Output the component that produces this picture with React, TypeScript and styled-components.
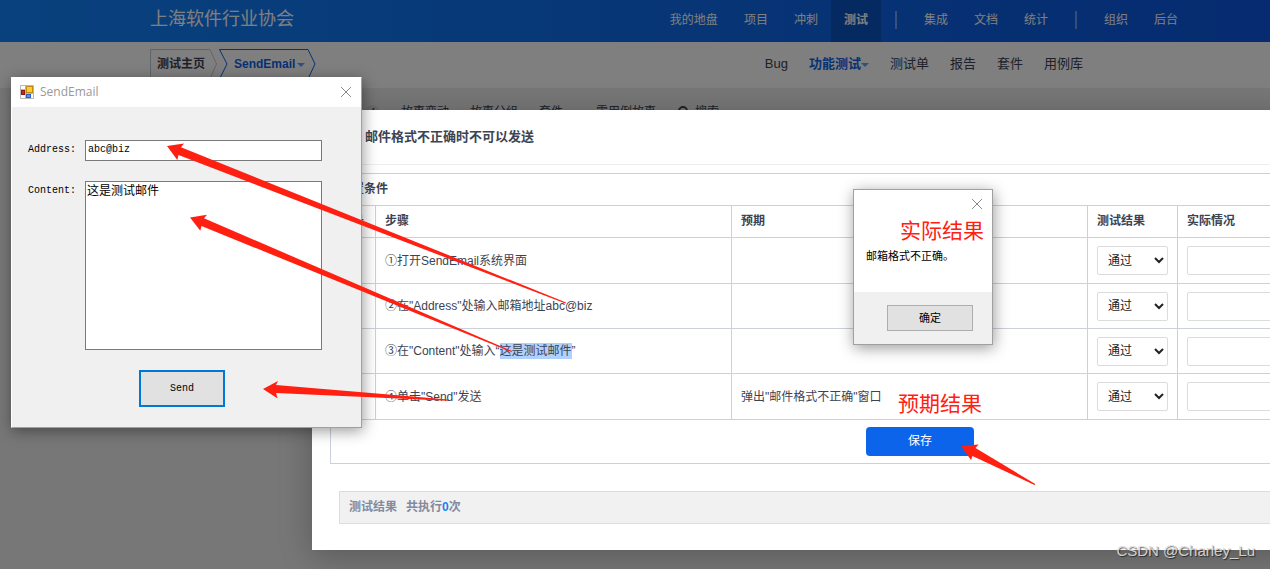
import React from "react";
import styled, { createGlobalStyle } from "styled-components";

const SANS = `"Liberation Sans", "Noto Sans CJK SC", sans-serif`;
const MONO = `"Liberation Mono", "Noto Sans CJK SC", monospace`;

const GlobalStyle = createGlobalStyle`
  *, *::before, *::after { box-sizing: border-box; }
  body { margin: 0; background: #777; font: 12px/20px ${SANS}; color: #3c4353; }
  button, input, select, textarea { font: inherit; color: inherit; margin: 0; }
  a { color: inherit; text-decoration: none; }
`;

const Page = styled.div`
  position: relative;
  min-height: 100vh;
  overflow: hidden;
  background: #efefef;
`;

const Header = styled.header`
  display: flex;
  align-items: center;
  height: 42px;
  padding: 0 79px 0 150px;
  background: linear-gradient(90deg, #1183fb 0%, #0c56e0 100%);
  color: #fff;
`;

const Brand = styled.h1`
  margin: 0 auto 4px 0;
  font-size: 18px;
  font-weight: 400;
  line-height: 24px;
`;

const MainNav = styled.nav`
  display: flex;
  align-items: center;
  height: 100%;
`;

const NavLink = styled.a<{ $active?: boolean }>`
  height: 100%;
  padding: 0 13px;
  line-height: 40px;
  white-space: nowrap;
  font-weight: ${(p) => (p.$active ? 700 : 400)};
  background: ${(p) => (p.$active ? "rgba(0, 0, 0, 0.16)" : "none")};
`;

const NavDivider = styled.span`
  width: 2px;
  height: 18px;
  margin: 0 14px 2px;
  background: rgba(255, 255, 255, 0.4);
`;

const SubHeader = styled.div`
  display: flex;
  align-items: flex-start;
  justify-content: space-between;
  height: 46px;
  padding: 7px 187px 0 150px;
  background: #fff;
`;

const Breadcrumb = styled.nav`
  position: relative;
  display: flex;
  gap: 29px;
  padding-left: 7px;
  line-height: 30px;
  font-weight: 700;
`;

const CrumbShape = styled.svg`
  position: absolute;
  top: 0;
  left: 0;
`;

const Crumb = styled.a<{ $active?: boolean }>`
  position: relative;
  display: flex;
  align-items: center;
  gap: 2px;
  color: ${(p) => (p.$active ? "#0c64eb" : "#3c4353")};
`;

const Caret = styled.span`
  width: 0;
  height: 0;
  margin-top: 2px;
  border: 4px solid transparent;
  border-top-color: #6c9cf0;
  border-bottom: 0;
`;

const SubNav = styled.nav`
  display: flex;
  gap: 21px;
  font-size: 13px;
  line-height: 29px;
`;

const SubLink = styled.a<{ $active?: boolean }>`
  display: flex;
  align-items: center;
  white-space: nowrap;
  font-weight: ${(p) => (p.$active ? 700 : 400)};
  color: ${(p) => (p.$active ? "#0c64eb" : "#3c4353")};
`;

const Toolbar = styled.div`
  display: flex;
  align-items: center;
  gap: 21px;
  padding: 14px 20px 0 365px;
`;

const ToolGroup = styled.div`
  display: flex;
  align-items: center;
  gap: 21px;
  margin-right: 12px;
`;

const Count = styled.span`
  width: 15px;
  height: 15px;
  border-radius: 8px;
  background: #ddd;
  font-size: 10px;
  line-height: 15px;
  text-align: center;
`;

const ToolLink = styled.a`
  display: flex;
  align-items: center;
  gap: 6px;
`;

const Backdrop = styled.div`
  position: absolute;
  inset: 0;
  background: rgba(0, 0, 0, 0.5);
`;

const Modal = styled.section`
  position: absolute;
  top: 110px;
  left: 312px;
  width: calc(100% - 54px);
  background: #fff;
  box-shadow: 0 6px 30px rgba(0, 0, 0, 0.25);
`;

const ModalTitle = styled.h2`
  height: 55px;
  margin: 0;
  padding: 0 53px;
  border-bottom: 1px solid #eee;
  font-size: 13px;
  line-height: 53px;
`;

const ModalBody = styled.div`
  padding: 8px 18px 26px;
`;

const StepTable = styled.table`
  width: 100%;
  border-collapse: collapse;
  border: 1px solid #cbd0db;
  table-layout: fixed;
  text-align: left;
`;

const NumberCol = styled.col`
  width: 45px;
`;

const ResultCol = styled.col`
  width: 90px;
`;

const RealCol = styled.col`
  width: 332px;
`;

const Cell = styled.td`
  padding: 0 9px;
  border: 1px solid #cbd0db;
`;

const HeadCell = styled(Cell).attrs({ as: "th" })`
  height: 32px;
  padding-bottom: 1px;
`;

const StepRow = styled.tr`
  height: 45px;
  &:first-child,
  &:last-child {
    height: 46px;
  }
`;

const SaveCell = styled(Cell)`
  height: 44px;
  text-align: center;
`;

const Highlight = styled.mark`
  padding: 1px 0;
  background: #b0d1ff;
  color: inherit;
`;

const ResultSelect = styled.select`
  display: block;
  width: 100%;
  height: 29px;
  padding: 0 6px;
  border: 1px solid #dcdcdc;
  border-radius: 2px;
  background: #fff;
  color: #222;
`;

const RealInput = styled.input`
  display: block;
  width: 100%;
  height: 29px;
  padding: 0 8px;
  border: 1px solid #dcdcdc;
  border-radius: 2px;
`;

const SaveButton = styled.button`
  width: 108px;
  height: 29px;
  border: 0;
  border-radius: 4px;
  padding: 0 0 2px;
  background: #0c64eb;
  color: #fff;
  vertical-align: middle;
`;

const ResultBar = styled.div`
  display: flex;
  gap: 9px;
  margin: 27px 9px 0;
  padding: 0 9px;
  border: 1px solid #ddd;
  background: #f1f1f1;
  color: #838a9d;
  font-weight: 700;
  line-height: 31px;
`;

const RunCount = styled.span`
  color: #1183fb;
`;

const DesktopWindow = styled.section<{ $x: number; $y: number; $w: number }>`
  position: absolute;
  left: ${(p) => p.$x}px;
  top: ${(p) => p.$y}px;
  width: ${(p) => p.$w}px;
  border: 1px solid #a0a0a0;
  background: #fff;
  color: #000;
  box-shadow: 1px 3px 14px rgba(0, 0, 0, 0.4);
`;

const MailWindow = styled(DesktopWindow)`
  border-color: #fff #a0a0a0 #a0a0a0 #fff;
`;

const TitleBar = styled.div`
  display: flex;
  align-items: center;
  gap: 6px;
  height: 29px;
  padding: 0 9px 2px 8px;
  color: #999;
  font-family: "Open Sans", sans-serif;
`;

const CloseButton = styled.button`
  display: flex;
  margin-left: auto;
  padding: 0;
  border: 0;
  background: none;
`;

const MailForm = styled.form`
  display: grid;
  grid-template-columns: 47px 237px;
  column-gap: 10px;
  row-gap: 20px;
  padding: 33px 16px 20px;
  background: #f0f0f0;
  font-family: ${MONO};
`;

const MailLabel = styled.label`
  font-size: 10px;
  line-height: 19px;
  white-space: nowrap;
`;

const MailInput = styled.input`
  width: 100%;
  height: 21px;
  padding: 0 2px 2px;
  border: 1px solid #7a7a7a;
  background: #fff;
  font-size: 10px;
`;

const MailText = styled.textarea`
  display: block;
  width: 100%;
  height: 169px;
  padding: 1px;
  border: 1px solid #7a7a7a;
  background: #fff;
  line-height: 18px;
  resize: none;
`;

const SendButton = styled.button`
  grid-column: 1 / -1;
  justify-self: center;
  width: 86px;
  height: 37px;
  margin-left: 14px;
  border: 2px solid #0078d7;
  background: #e1e1e1;
  font-size: 10px;
`;

const AlertTop = styled.div`
  display: flex;
  padding: 8px 9px 0;
`;

const AlertText = styled.p`
  margin: 0;
  padding: 36px 12px 26px;
  font-size: 11px;
`;

const AlertFooter = styled.div`
  display: flex;
  justify-content: flex-end;
  padding: 13px 19px;
  background: #f0f0f0;
`;

const OkButton = styled.button`
  width: 86px;
  height: 26px;
  padding: 0;
  border: 1px solid #adadad;
  background: #e1e1e1;
  font-size: 11px;
`;

const Arrows = styled.svg`
  position: absolute;
  top: 0;
  left: 0;
  pointer-events: none;
`;

const Note = styled.span<{ $x: number; $y: number }>`
  position: absolute;
  left: ${(p) => p.$x}px;
  top: ${(p) => p.$y}px;
  color: #ff2012;
  font-family: "Noto Sans CJK SC", sans-serif;
  font-size: 21px;
  line-height: 28px;
`;

const Watermark = styled.span`
  position: absolute;
  right: 15px;
  bottom: 8px;
  color: rgba(225, 225, 225, 0.9);
  font-size: 15px;
  text-shadow: 1px 1px 1px rgba(0, 0, 0, 0.6);
`;

const CloseIcon = () => (
  <svg width="12" height="12" viewBox="0 0 12 12" stroke="#8a8a8a" fill="none">
    <path d="M1 1 11 11M11 1 1 11" />
  </svg>
);

const AppIcon = () => (
  <svg width="14" height="14" viewBox="0 0 14 14">
    <path d="M.5.5h13v13H.5z" fill="#fff" stroke="#b8b8b8" />
    <path d="M0 9.500h6M5.500 0v14M5 8.500h9M0 4.500h5" fill="none" stroke="#b8b8b8" />
    <rect x="1.500" y="5.500" width="3" height="4" fill="#c3281c" stroke="#8e1a12" />
    <rect x="6.500" y="1.500" width="6" height="6" fill="#fccb35" stroke="#c18d0c" />
    <rect x="6.500" y="9.500" width="4" height="3" fill="#5b93f0" stroke="#2b5fc8" />
  </svg>
);

const steps: { text: React.ReactNode; expected: string }[] = [
  { text: "①打开SendEmail系统界面", expected: "" },
  { text: '②在"Address"处输入邮箱地址abc@biz', expected: "" },
  {
    text: (
      <>
        ③在"Content"处输入“<Highlight>这是测试邮件</Highlight>”
      </>
    ),
    expected: "",
  },
  { text: '④单击"Send"发送', expected: '弹出"邮件格式不正确"窗口' },
];

export default function App() {
  return (
    <Page>
      <GlobalStyle />
      <Header>
        <Brand>上海软件行业协会</Brand>
        <MainNav>
          <NavLink href="#">我的地盘</NavLink>
          <NavLink href="#">项目</NavLink>
          <NavLink href="#">冲刺</NavLink>
          <NavLink href="#" $active>测试</NavLink>
          <NavDivider />
          <NavLink href="#">集成</NavLink>
          <NavLink href="#">文档</NavLink>
          <NavLink href="#">统计</NavLink>
          <NavDivider />
          <NavLink href="#">组织</NavLink>
          <NavLink href="#">后台</NavLink>
        </MainNav>
      </Header>
      <SubHeader>
        <Breadcrumb>
          <CrumbShape width="168" height="31" viewBox="0 0 168 31" fill="none">
            <path d="M.5 30V.5H60L66.500 15 60 30" stroke="#c4c8d2" />
            <path d="M69.500 30 77 15 69.500.5H158L165 15 158 30" stroke="#0c64eb" />
          </CrumbShape>
          <Crumb href="#">测试主页</Crumb>
          <Crumb href="#" $active>
            SendEmail <Caret />
          </Crumb>
        </Breadcrumb>
        <SubNav>
          <SubLink href="#">Bug</SubLink>
          <SubLink href="#" $active>
            功能测试
            <Caret />
          </SubLink>
          <SubLink href="#">测试单</SubLink>
          <SubLink href="#">报告</SubLink>
          <SubLink href="#">套件</SubLink>
          <SubLink href="#">用例库</SubLink>
        </SubNav>
      </SubHeader>
      <Toolbar>
        <ToolGroup>
          <Count>4</Count>
          <ToolLink href="#">故事变动</ToolLink>
          <ToolLink href="#">故事分组</ToolLink>
          <ToolLink href="#">套件</ToolLink>
        </ToolGroup>
        <ToolLink href="#">零用例故事</ToolLink>
        <ToolLink href="#">
          <svg width="12" height="12" viewBox="0 0 12 12" fill="none" stroke="#3c4353" strokeWidth="2">
            <circle cx="6" cy="5" r="4" />
            <path d="m8 8 3 3" />
          </svg>
          搜索
        </ToolLink>
      </Toolbar>

      <Backdrop />

      <Modal>
        <ModalTitle>邮件格式不正确时不可以发送</ModalTitle>
        <ModalBody>
          <StepTable>
            <colgroup>
              <NumberCol />
              <col />
              <col />
              <ResultCol />
              <RealCol />
            </colgroup>
            <thead>
              <tr>
                <HeadCell colSpan={5}>前置条件</HeadCell>
              </tr>
              <tr>
                <HeadCell>编号</HeadCell>
                <HeadCell>步骤</HeadCell>
                <HeadCell>预期</HeadCell>
                <HeadCell>测试结果</HeadCell>
                <HeadCell>实际情况</HeadCell>
              </tr>
            </thead>
            <tbody>
              {steps.map((step, i) => (
                <StepRow key={i}>
                  <Cell>{i + 1}</Cell>
                  <Cell>{step.text}</Cell>
                  <Cell>{step.expected}</Cell>
                  <Cell>
                    <ResultSelect aria-label="测试结果" defaultValue="通过">
                      <option>通过</option>
                      <option>失败</option>
                    </ResultSelect>
                  </Cell>
                  <Cell>
                    <RealInput aria-label="实际情况" />
                  </Cell>
                </StepRow>
              ))}
            </tbody>
            <tfoot>
              <tr>
                <SaveCell colSpan={5}>
                  <SaveButton type="button">保存</SaveButton>
                </SaveCell>
              </tr>
            </tfoot>
          </StepTable>
          <ResultBar>
            <span>测试结果</span>
            <span>
              共执行<RunCount>0</RunCount>次
            </span>
          </ResultBar>
        </ModalBody>
      </Modal>

      <MailWindow $x={11} $y={77} $w={351}>
        <TitleBar>
          <AppIcon />
          SendEmail
          <CloseButton type="button" aria-label="关闭">
            <CloseIcon />
          </CloseButton>
        </TitleBar>
        <MailForm>
          <MailLabel htmlFor="address">Address:</MailLabel>
          <MailInput id="address" defaultValue="abc@biz" />
          <MailLabel htmlFor="content">Content:</MailLabel>
          <MailText id="content" defaultValue="这是测试邮件" />
          <SendButton type="button">Send</SendButton>
        </MailForm>
      </MailWindow>

      <DesktopWindow $x={853} $y={189} $w={140}>
        <AlertTop>
          <CloseButton type="button" aria-label="关闭">
            <CloseIcon />
          </CloseButton>
        </AlertTop>
        <AlertText>邮箱格式不正确。</AlertText>
        <AlertFooter>
          <OkButton type="button">确定</OkButton>
        </AlertFooter>
      </DesktopWindow>

      <Note $x={900} $y={215}>实际结果</Note>
      <Note $x={898} $y={388}>预期结果</Note>

      <Arrows width="1270" height="569" viewBox="0 0 1270 569" fill="#ff2012">
        <path d="M167 146 184 143.600 181 147.200 566 302.500 565.500 303.500 178.500 155 177.300 160Z" />
        <path d="M190 217.500 207 214.700 204 218.300 512 351 511.500 352 201.500 226 200.300 230.700Z" />
        <path d="M263 389 278 381 276 385 448 399.500 448 400.700 276 393 277.700 398.500Z" />
        <path d="M961 446 978.600 444.500 975.500 448 1035.300 484 1034.500 485 972.500 456 971 460Z" />
      </Arrows>

      <Watermark>CSDN @Charley_Lu</Watermark>
    </Page>
  );
}
